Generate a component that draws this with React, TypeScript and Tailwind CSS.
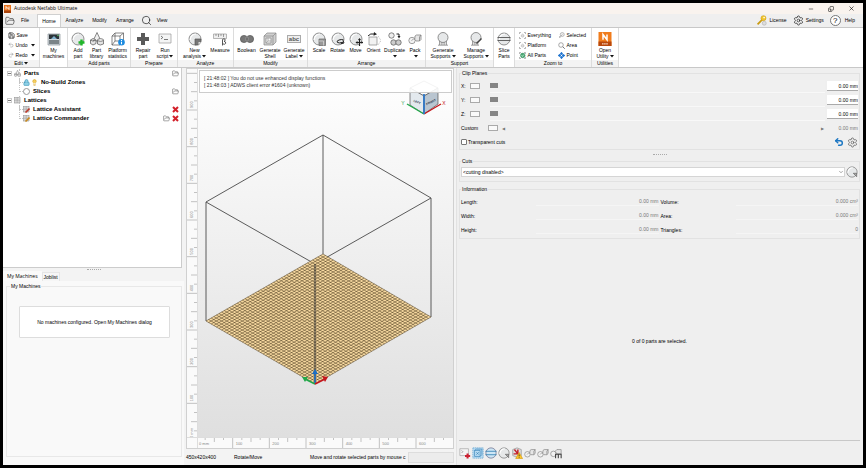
import type { ReactNode } from 'react'
import { Minus, X, Copy, Settings, Undo2, Redo2, Save, FolderOpen, Search, Lock, Lightbulb, ChevronDown } from 'lucide-react'

const INK = '#555'

function Icon({ children, className = 'w-[14px] h-[14px]' }: { children: ReactNode; className?: string }) {
  return (
    <svg viewBox="0 0 14 14" className={`shrink-0 ${className}`} fill="none" stroke={INK} strokeWidth="0.7">
      {children}
    </svg>
  )
}

const Ball = () => (
  <>
    <circle cx="7" cy="7" r="6" fill="#e6e8e9" stroke="#666" />
    <path d="M2 8 Q3 2 8 2" stroke="#fff" strokeWidth="1.2" />
  </>
)

const icons: Record<string, ReactNode> = {
  machines: (
    <>
      <path d="M1 2 H13 V13 H1Z" fill="#cfd6da" stroke="#8a9398" />
      <path d="M2 2.500 H12 V7 H2Z" fill="#2d3438" stroke="none" />
      <path d="M4 7 L7 4 L10 7Z" fill="#7fb2d0" stroke="none" />
      <path d="M2 9 H12 M2 11 H12" stroke="#60696e" strokeWidth="1.4" />
      <circle cx="11" cy="3.500" r="0.8" fill="#5cc46a" stroke="none" />
    </>
  ),
  addPart: (
    <>
      <Ball />
      <path d="M10.500 7.500 V13.500 M7.500 10.500 H13.500" stroke="#1fb52a" strokeWidth="2.400" />
    </>
  ),
  library: (
    <>
      <path d="M7 0.500 L11 9 H3Z" fill="#f1f1f1" />
      <path d="M0.500 8 L3 6.500 L6 8 V11.500 L3 13 L0.500 11.500Z M0.500 8 L3 9.200 L6 8" fill="#e4e4e4" />
      <path d="M7.500 8 V12 Q10 14 13.500 12 V8" fill="#e4e4e4" />
      <ellipse cx="10.500" cy="8" rx="3" ry="1.300" fill="#f6f6f6" />
    </>
  ),
  stats: (
    <>
      <path d="M1 4 H9 V13 H1Z M4 1 H12.500 V9 M1 4 L4 1 M9 4 L12.500 1 M4 1 V9 M1 13 L4 9 H10" />
      <circle cx="10.500" cy="10.300" r="3.300" fill="#1c8be0" stroke="none" />
      <path d="M10.500 9.700 V12.300 M10.500 8 V9" stroke="#fff" strokeWidth="1.100" />
    </>
  ),
  repair: <path d="M7 1 V13 M1 7 H13" stroke="#5a5a5a" strokeWidth="4" />,
  script: (
    <>
      <path d="M1 2 H13 V11 H1Z" fill="#f4f5f5" stroke="#999" />
      <path d="M3 4 L4.800 5.500 L3 7 M6 7.500 H10" stroke="#444" />
    </>
  ),
  analysis: (
    <>
      <Ball />
      <path d="M7 7 H13 V10 L10.500 13 H7Z" fill="#777" stroke="#555" />
      <path d="M10.500 13 V10 H13Z" fill="#ddd" stroke="none" />
    </>
  ),
  measure: (
    <>
      <path d="M0.500 2 H13.500 V6.500 H0.500Z" fill="#eee" stroke="#999" />
      <path d="M3 2 V4 M5.500 2 V5 M8 2 V4 M10.500 2 V5" stroke="#777" />
      <path d="M9.500 13.500 V7.500 Q11 6 12.200 7.500 Q12.500 9 11 9.300 Q13.300 9.700 12.600 11.500 Q11.500 13 9.800 11.800" stroke="#444" strokeWidth="0.900" />
    </>
  ),
  boolean: (
    <>
      <circle cx="4" cy="7" r="3.600" fill="#777" />
      <circle cx="10" cy="7" r="3.600" fill="#777" />
      <ellipse cx="7" cy="7" rx="1.100" ry="2.600" fill="#555" stroke="#aaa" />
    </>
  ),
  shell: (
    <>
      <path d="M1 4 L4 1 H13 V10 L10 13 H1Z" fill="#cfcfcf" stroke="#888" />
      <path d="M1 4 H10 V13 M10 4 L13 1" stroke="#888" />
      <path d="M3 6 H8 V11 H3Z" fill="#f6f6f6" stroke="#888" />
      <path d="M3 11 L5 9 H8 M5 9 V6" stroke="#999" />
    </>
  ),
  scale: (
    <>
      <Ball />
      <path d="M7 7 H13.500 V13.500 H7Z" fill="#999" stroke="#666" />
      <path d="M7 9 H11.500 V13.500" stroke="#ddd" />
    </>
  ),
  rotate: (
    <>
      <Ball />
      <path d="M12.500 8 Q11 7 8 8 Q5 9 6.500 10.500 Q8 11.500 12 10.300 M12 8.500 L13 11 L9.800 11.800" stroke="#222" strokeWidth="1" />
    </>
  ),
  move: (
    <>
      <Ball />
      <path d="M10.500 7 V14 M7 10.500 H14" stroke="#222" strokeWidth="1.200" />
      <path d="M10.500 6 L12 8 H9Z M14.200 10.500 L12.500 9 V12Z M6.500 10.500 L8.500 9 V12Z" fill="#222" stroke="none" />
    </>
  ),
  orient: (
    <>
      <path d="M2 5 H10 V13 H2Z" fill="#f2f2f2" stroke="#888" />
      <path d="M11 4 L14 8.500 L11 13" stroke="#aaa" strokeDasharray="1.200 0.800" />
      <path d="M1 4 Q3 1 8 2" stroke="#222" strokeWidth="1" />
      <path d="M7 0 L10 2.300 L6.500 3.700Z" fill="#222" stroke="none" />
    </>
  ),
  duplicate: (
    <>
      <circle cx="3.500" cy="3.500" r="2.700" fill="#eee" />
      <circle cx="5.500" cy="10.500" r="2.700" fill="#ccc" />
      <circle cx="10.500" cy="10.500" r="2.700" fill="#ccc" />
      <path d="M8.500 2 H11 V4" stroke="#222" strokeWidth="1" />
      <path d="M9.500 4 H12.500 L11 6.500Z" fill="#222" stroke="none" />
    </>
  ),
  pack: (
    <>
      <circle cx="4" cy="8.500" r="3.200" fill="#f2f2f2" stroke="#777" />
      <path d="M7 4 L8.500 3 H13 V7.500 L11.500 9 H8 Q6 8 7 4 M11.500 9 V5 L13 3" fill="#e6e6e6" stroke="#777" />
      <path d="M3.500 9 Q4 6.500 7 7" stroke="#999" />
    </>
  ),
  supports: (
    <>
      <circle cx="7" cy="5.500" r="5" fill="#e6e8e9" stroke="#666" />
      <path d="M3.500 9 V13 M5.200 10 V13 M7 10.500 V13 M8.800 10 V13 M10.500 9 V13 M2 13.200 H12" stroke="#777" />
    </>
  ),
  manage: (
    <>
      <circle cx="7" cy="5.500" r="5" fill="#e6e8e9" stroke="#666" />
      <path d="M3.500 9 V13 M5.200 10 V13 M7 10.500 V13 M8.800 10 V13 M2 13.200 H10" stroke="#777" />
      <path d="M7.500 11.500 L12.500 6.500" stroke="#444" strokeWidth="1.500" />
    </>
  ),
  slice: (
    <>
      <Ball />
      <path d="M0.500 5.500 H13.500 M0.500 8.500 H13.500" stroke="#555" strokeWidth="0.900" />
    </>
  ),
  corners: (
    <>
      <path d="M1 4 V1 H4 M10 1 H13 V4 M13 10 V13 H10 M4 13 H1 V10" stroke="#888" strokeWidth="1.200" />
      <path d="M4.500 6 L7 4 L10 6 V9 L7 10.500 L4.500 9Z" stroke="#999" fill="#ddd" />
    </>
  ),
  allParts: (
    <>
      <path d="M1 4 V1 H4 M10 1 H13 V4 M13 10 V13 H10 M4 13 H1 V10" stroke="#888" strokeWidth="1.200" />
      <circle cx="7.500" cy="7" r="4.800" fill="#4aa874" stroke="#2d7d52" />
      <path d="M5 6 L7 9 L10 5" stroke="#dff2e6" strokeWidth="1.200" />
    </>
  ),
  selected: (
    <>
      <circle cx="8.500" cy="5" r="4" stroke="#999" strokeWidth="1.200" fill="#eee" />
      <path d="M2 12 L9 5 M2 8 L5 11" stroke="#999" strokeWidth="1.200" />
    </>
  ),
  area: (
    <>
      <circle cx="6" cy="6" r="4.600" stroke="#666" strokeWidth="1.100" />
      <path d="M9.500 9.500 L13.500 13.500" stroke="#666" strokeWidth="1.800" />
    </>
  ),
  point: (
    <>
      <path d="M7 2 V12 M2 7 H12" stroke="#1f74d0" strokeWidth="2.600" />
      <path d="M7 -0.500 L11 4.500 H3Z M7 14.500 L11 9.500 H3Z M-0.500 7 L4.500 3 V11Z M14.500 7 L9.500 3 V11Z" fill="#1f74d0" stroke="none" />
      <circle cx="7" cy="7" r="1.300" fill="#fff" stroke="none" />
    </>
  ),
  play: (
    <>
      <path d="M1 2 H11 V10 H1Z" fill="#f4f4f4" stroke="#999" />
      <path d="M3 4 L4.500 5.500 L3 7" stroke="#777" />
      <path d="M10 7.500 V13.500 M7 10.500 H13" stroke="#cc2233" strokeWidth="2.400" />
    </>
  ),
  blueBox: (
    <>
      <path d="M1 1 H13 V13 H1Z" fill="#b9dcf3" stroke="#4792c6" strokeDasharray="1.500 0.700" />
      <path d="M3 4 H9.500 V11 H3Z M3 4 L5 2.500 H11.500 V9 L9.500 11 M5 6 L8 9 M8 6 L5 9" stroke="#2a78b0" />
    </>
  ),
  blueSlice: (
    <>
      <circle cx="7" cy="7" r="6" fill="#cde6f5" stroke="#557" />
      <path d="M0.500 5 H13.500 M0.500 9 H13.500" stroke="#3683b5" strokeWidth="1" />
    </>
  ),
  ball: (
    <>
      <Ball />
      <path d="M8.500 8.500 H12.500 V12.500Z" fill="#aaa" stroke="#555" />
    </>
  ),
  warning: (
    <>
      <path d="M2 3 L7 1 L12 3 V10 L7 12 L2 10Z" fill="#ddd" stroke="#888" />
      <path d="M4 3 L8 8 M8 3 V8 H3" stroke="#c3202c" strokeWidth="1.700" />
      <path d="M9.500 6.500 L13.500 13.500 H5.500Z" fill="#ffc928" stroke="#d19100" />
      <path d="M9.500 8.700 V11 M9.500 11.800 V12.600" stroke="#222" strokeWidth="0.900" />
    </>
  ),
  packM: (
    <>
      <circle cx="4" cy="8" r="3.200" fill="#f2f2f2" stroke="#777" />
      <path d="M6 5 L8 3 H13 V8 H8Z" fill="#e6e6e6" stroke="#777" />
      <path d="M6.500 13 V8.500 H13 V13 M9.700 8.500 V13" stroke="#444" strokeWidth="1.300" />
    </>
  ),
}

type Item = { icon: string; label: string[]; w: string; arrow?: boolean }
const groups: { name: string; w: string; items: Item[] }[] = [
  { name: '', w: 'w-[28px]', items: [{ icon: 'machines', label: ['My', 'machines'], w: 'w-[26px]' }] },
  {
    name: 'Add parts', w: 'w-[63px]', items: [
      { icon: 'addPart', label: ['Add', 'part'], w: 'w-[19px]' },
      { icon: 'library', label: ['Part', 'library'], w: 'w-[18px]' },
      { icon: 'stats', label: ['Platform', 'statistics'], w: 'w-[24px]' },
    ],
  },
  {
    name: 'Prepare', w: 'w-[47px]', items: [
      { icon: 'repair', label: ['Repair', 'part'], w: 'w-[22px]' },
      { icon: 'script', label: ['Run', 'script'], w: 'w-[22px]', arrow: true },
    ],
  },
  {
    name: 'Analyze', w: 'w-[56px]', items: [
      { icon: 'analysis', label: ['New', 'analysis'], w: 'w-[29px]', arrow: true },
      { icon: 'measure', label: ['Measure'], w: 'w-[22px]' },
    ],
  },
  {
    name: 'Modify', w: 'w-[74px]', items: [
      { icon: 'boolean', label: ['Boolean'], w: 'w-[23px]' },
      { icon: 'shell', label: ['Generate', 'Shell'], w: 'w-[24px]' },
      { icon: 'abc', label: ['Generate', 'Label'], w: 'w-[24px]', arrow: true },
    ],
  },
  {
    name: 'Arrange', w: 'w-[118px]', items: [
      { icon: 'scale', label: ['Scale'], w: 'w-[19px]' },
      { icon: 'rotate', label: ['Rotate'], w: 'w-[18px]' },
      { icon: 'move', label: ['Move'], w: 'w-[18px]' },
      { icon: 'orient', label: ['Orient'], w: 'w-[18px]' },
      { icon: 'duplicate', label: ['Duplicate', ''], w: 'w-[24px]', arrow: true },
      { icon: 'pack', label: ['Pack', ''], w: 'w-[17px]', arrow: true },
    ],
  },
  {
    name: 'Support', w: 'w-[68px]', items: [
      { icon: 'supports', label: ['Generate', 'Supports'], w: 'w-[33px]', arrow: true },
      { icon: 'manage', label: ['Manage', 'Supports'], w: 'w-[33px]', arrow: true },
    ],
  },
  { name: '', w: 'w-[21px]', items: [{ icon: 'slice', label: ['Slice', 'Parts'], w: 'w-[20px]' }] },
]

const Caret = () => (
  <svg viewBox="0 0 4 3" className="inline-block w-1 h-[3px] ml-px align-middle">
    <path d="M0 0 H4 L2 2.500Z" fill="#111" />
  </svg>
)

function Group({ name, w, children }: { name: ReactNode; w: string; children: ReactNode }) {
  return (
    <div className={`${w} shrink-0 flex flex-col border-r border-[#dcdcdc]`}>
      <div className="flex-1 min-h-0 flex justify-center pt-1">{children}</div>
      <div className={`h-[7px] shrink-0 leading-[7px] flex justify-center items-center ${name ? 'bg-[#f3f3f3]' : ''}`}>{name}</div>
    </div>
  )
}

function RibbonButton({ item }: { item: Item }) {
  const last = item.label.length - 1
  return (
    <button className={`${item.w} shrink-0 flex flex-col items-center justify-start leading-[6px] whitespace-nowrap`}>
      {item.icon === 'abc' ? (
        <span className="h-[14px] flex items-center mb-px">
          <span className="border border-[#aaa] bg-[#eee] px-px text-[6px] leading-[6px] font-bold text-[#555]">abc</span>
        </span>
      ) : (
        <Icon className="w-[14px] h-[14px] mb-px">{icons[item.icon]}</Icon>
      )}
      {item.label.map((line, i) => (
        <span key={i}>
          {line}
          {item.arrow && i === last && <Caret />}
        </span>
      ))}
    </button>
  )
}

function ZoomButton({ icon, label }: { icon: string; label: string }) {
  return (
    <button className="flex items-center gap-[2px] h-[10px]">
      <Icon className="w-[7px] h-[7px]">{icons[icon]}</Icon>
      {label}
    </button>
  )
}

function TitleBar() {
  return (
    <header className="h-[11px] flex items-center bg-[#f9f3ee] pl-px shrink-0 font-['Open_Sans',sans-serif]">
      <svg viewBox="0 0 7 8" className="w-[7px] h-2">
        <path d="M0 0 H7 V8 H0Z" fill="#e8711a" />
        <path d="M0 5.500 H7 V8 H0Z" fill="#a8430c" />
        <path d="M2 4.500 V1.500 L5 4.500 V1.500" fill="none" stroke="#fff" strokeWidth="0.9" />
      </svg>
      <span className="ml-[3px] flex-1">Autodesk Netfabb Ultimate</span>
      <div className="flex items-center gap-[14px] pr-2">
        <button aria-label="Minimize"><Minus className="w-[6px] h-[6px]" /></button>
        <button aria-label="Restore"><Copy className="w-[6px] h-[6px] -scale-x-100 rotate-180" /></button>
        <button aria-label="Close"><X className="w-[7px] h-[7px]" /></button>
      </div>
    </header>
  )
}

function MenuBar() {
  return (
    <nav className="h-[13px] flex items-stretch bg-[#efefef] shrink-0">
      <button aria-label="Open" className="w-[14px] pl-[2px]"><FolderOpen className="w-[10px] h-[10px]" strokeWidth={1.2} /></button>
      <button className="w-4 mr-1 text-center">File</button>
      <button className="w-6 bg-white border-x border-t border-[#d0d0d0]">Home</button>
      <button className="w-[27px]">Analyze</button>
      <button className="w-[23px]">Modify</button>
      <button className="w-7">Arrange</button>
      <button aria-label="Search" className="w-[15px] flex items-center justify-center">
        <Search className="w-[11px] h-[11px]" strokeWidth={1.3} />
      </button>
      <button className="w-4">View</button>
      <div className="flex-1" />
      <div className="flex items-center gap-[6px] pr-2">
        <button className="flex items-center gap-[2px]">
          <Icon className="w-[11px] h-[11px]">
            <path d="M2 12 L8 6" stroke="#c99a10" strokeWidth="2.200" />
            <circle cx="9.500" cy="4" r="3.200" fill="#f2c52c" stroke="#c99a10" />
            <circle cx="10.300" cy="3.300" r="1" fill="#fff" stroke="none" />
            <circle cx="10.500" cy="10.500" r="2.500" fill="#ddd" stroke="#aaa" />
          </Icon>
          License
        </button>
        <button className="flex items-center gap-[2px]"><Settings className="w-[11px] h-[11px]" strokeWidth={1.3} />Settings</button>
        <button className="flex items-center gap-1">
          <span className="w-[11px] h-[11px] rounded-full border border-[#777] text-[8px] leading-[9px] bg-white">?</span>
          Help
        </button>
      </div>
    </nav>
  )
}

function Ribbon() {
  return (
    <div className="h-[41px] flex bg-white border-y border-[#c8c8c8] shrink-0 overflow-hidden">
      <Group name={<>Edit <Caret /></>} w="w-[37px]">
        <div className="flex flex-col w-[27px] -mt-[2px]">
          <button className="h-[10px] shrink-0 flex items-center gap-[2px]"><Save className="w-[7px] h-[7px]" />Save</button>
          <button className="h-[10px] shrink-0 flex items-center gap-[2px]"><Undo2 className="w-[7px] h-[6px] text-[#888]" />Undo<span className="ml-auto leading-none"><Caret /></span></button>
          <button className="h-[10px] shrink-0 flex items-center gap-[2px]"><Redo2 className="w-[7px] h-[6px] text-[#888]" />Redo<span className="ml-auto leading-none"><Caret /></span></button>
        </div>
      </Group>
      {groups.map((group, i) => (
        <Group key={i} name={group.name} w={group.w}>
          {group.items.map((item) => <RibbonButton key={item.icon} item={item} />)}
        </Group>
      ))}
      <Group name="Zoom to" w="w-[77px]">
        <div className="grid grid-cols-[39px_30px] content-start -mt-[2px]">
          <ZoomButton icon="corners" label="Everything" />
          <ZoomButton icon="selected" label="Selected" />
          <ZoomButton icon="corners" label="Platform" />
          <ZoomButton icon="area" label="Area" />
          <ZoomButton icon="allParts" label="All Parts" />
          <ZoomButton icon="point" label="Point" />
        </div>
      </Group>
      <Group name="Utilities" w="w-[27px]">
        <button className="flex flex-col items-center justify-start leading-[6px]">
          <svg viewBox="0 0 14 14" className="w-[14px] h-[14px] mb-px">
            <path d="M0.500 0 H13.500 V14 H0.500Z" fill="#f07c1c" />
            <path d="M0.500 9.500 H13.500 V14 H0.500Z" fill="#b8480d" />
            <path d="M5 7.800 V2.500 L9 7.800 V2.500" fill="none" stroke="#fff" strokeWidth="1.500" />
            <path d="M4 11.800 H10" stroke="#f6d5bd" strokeWidth="1.300" strokeDasharray="1.600 0.500" />
          </svg>
          <span>Open</span>
          <span>Utility<Caret /></span>
        </button>
      </Group>
    </div>
  )
}

const Cross = () => (
  <svg viewBox="0 0 7 7" className="w-[7px] h-[7px]">
    <path d="M1 1 L6 6 M6 1 L1 6" stroke="#d3202a" strokeWidth="2" />
  </svg>
)

const Folder = () => <FolderOpen className="w-[7px] h-[7px] text-[#444]" strokeWidth={1.6} />

const Hatch = ({ accent }: { accent?: string }) => (
  <svg viewBox="0 0 7 7" className="w-[7px] h-[7px] shrink-0">
    <path d="M0 1 H7 M0 3 H7 M0 5 H7 M1 0 V7 M3 0 V7 M5 0 V7" stroke="#777" strokeWidth="0.8" strokeDasharray="1 0.6" />
    {accent && <path d="M2.500 6.500 L6.500 2.500" stroke={accent} strokeWidth="1.600" />}
  </svg>
)

function TreeRow({ root, icon, label, actions }: { root?: boolean; icon: ReactNode; label: string; actions?: ReactNode }) {
  return (
    <li className="h-[9px] flex items-center pl-1 pr-[2px]">
      {root ? (
        <button aria-label="Collapse" className="w-[5px] h-[5px] border border-[#ccc] flex items-center justify-center">
          <span className="w-[3px] h-px bg-[#777]" />
        </button>
      ) : (
        <span className="self-stretch w-1 ml-3 -mt-[9px] mb-1 border-l border-b border-dotted border-[#c4c4c4]" />
      )}
      <span className={`flex items-center gap-px mr-[3px] ${root ? 'ml-[2px]' : ''}`}>{icon}</span>
      <span className="flex-1">{label}</span>
      <span className="flex gap-[2px]">{actions}</span>
    </li>
  )
}

function SidePanel() {
  return (
    <aside className="flex flex-col min-w-0 bg-[#f3f3f3]">
      <div className="h-[200px] shrink-0 bg-white border-b border-r border-[#ccc] mr-[2px]">
        <ul className="pt-px font-bold text-[6px] leading-[9px]">
          <TreeRow
            root
            icon={<Icon className="w-[7px] h-[7px]">{icons.library}</Icon>}
            label="Parts"
            actions={<Folder />}
          />
          <TreeRow
            icon={
              <>
                <Lock className="w-[7px] h-[7px] text-[#3593b5]" fill="#8fd0e6" />
                <Lightbulb className="w-[7px] h-[7px] text-[#d8a020]" fill="#f6d060" />
              </>
            }
            label="No-Build Zones"
          />
          <TreeRow icon={<span className="w-[7px] h-[7px] rounded-full border border-[#999]" />} label="Slices" actions={<Folder />} />
          <TreeRow root icon={<Hatch />} label="Lattices" />
          <TreeRow icon={<Hatch accent="#c0392b" />} label="Lattice Assistant" actions={<Cross />} />
          <TreeRow icon={<Hatch accent="#c98a1e" />} label="Lattice Commander" actions={<><Folder /><Cross /></>} />
        </ul>
      </div>
      <div className="h-[2px] w-[14px] mx-auto border-b border-dotted border-[#aaa]" />
      <div className="h-[11px] flex items-end shrink-0">
        <button className="h-[10px] px-1 bg-[#fafafa] font-['Open_Sans',sans-serif]">My Machines</button>
        <button className="h-[9px] px-px bg-[#f6f6f6] border border-b-0 border-[#e6e6e6]">Joblist</button>
      </div>
      <div className="flex-1 bg-[#f9f9f9] pl-[3px] pr-[2px] pt-px pb-2">
        <fieldset className="h-full border border-[#e8e8e8] pl-3 pr-[11px]">
          <legend className="-ml-[9px] px-px leading-[8px]">My Machines</legend>
          <button className="mt-4 w-full h-8 bg-white border border-[#ddd] rounded-[1px]">
            No machines configured. Open My Machines dialog
          </button>
        </fieldset>
      </div>
    </aside>
  )
}

const LEFT: [number, number] = [9, 253]
const BACK: [number, number] = [126, 186]
const RIGHT: [number, number] = [234, 249]
const FRONT: [number, number] = [118, 316]

function gridLines(a: number[], b: number[], c: number[], d: number[], n: number) {
  let path = ''
  for (let i = 0; i <= n; i++) {
    const t = i / n
    path += `M${a[0] + (b[0] - a[0]) * t} ${a[1] + (b[1] - a[1]) * t}`
    path += `L${c[0] + (d[0] - c[0]) * t} ${c[1] + (d[1] - c[1]) * t}`
  }
  return path
}

function Viewport() {
  return (
    <svg viewBox="1 1 255 370" preserveAspectRatio="xMinYMin slice" className="block w-full h-full">
      <g fill="none" stroke="#4a4a4a" strokeWidth="0.9">
        <path d="M126 67 L9 134 L118 196 L234 130Z" />
        <path d="M9 134 V253 M234 130 V249 M126 67 V186" />
      </g>
      <path d={`M${LEFT} L${BACK} L${RIGHT} L${FRONT}Z`} fill="#f7d9a0" />
      <g fill="none" stroke="#44341a" strokeWidth="0.5">
        <path d={gridLines(LEFT, FRONT, BACK, RIGHT, 42)} />
        <path d={gridLines(LEFT, BACK, FRONT, RIGHT, 45)} />
      </g>
      <path d="M118 196 V316" stroke="#333" strokeWidth="1" />
      <g strokeWidth="1.6">
        <path d="M118 316 V304" stroke="#1d6fc4" />
        <path d="M118 316 L108 311" stroke="#22a84a" />
        <path d="M118 316 L128 311" stroke="#c4161c" />
      </g>
      <path d="M118 301 L121 306 H115Z" fill="#1d6fc4" />
      <path d="M105 309 L111 309 L108 314Z" fill="#22a84a" />
      <path d="M131 309 L125 308 L128 314Z" fill="#c4161c" />
      <g strokeWidth="0.7" stroke="#555">
        <path d="M213 20 L227 13 L241 20 L227 28Z" fill="#fdfdfd" />
        <path d="M213 20 L227 28 V46 L213 37Z" fill="#e3e9ee" />
        <path d="M241 20 L227 28 V46 L241 36Z" fill="#b9c5d0" />
      </g>
      <path d="M210 36 L227 46" stroke="#22a84a" strokeWidth="1.4" />
      <path d="M244 36 L227 46" stroke="#c4161c" strokeWidth="1.4" />
      <path d="M227 46 V26" stroke="#2f78c8" strokeWidth="1.8" />
      <g fontFamily="Liberation Sans, sans-serif" fontSize="5" textAnchor="middle">
        <text x="206" y="37" fill="#2a9a4a">Y</text>
        <text x="247" y="37" fill="#c4161c">X</text>
        <text x="220" y="35" fontSize="3" fontWeight="bold" fill="#345" transform="rotate(24 220 34)">LEFT</text>
        <text x="234" y="35" fontSize="3" fontWeight="bold" fill="#234" transform="rotate(-26 234 34)">FRONT</text>
      </g>
    </svg>
  )
}

function VerticalRuler() {
  const step = 110 / 3
  return (
    <svg viewBox="0 0 10 370" preserveAspectRatio="xMinYMin slice" className="block w-full h-full">
      {Array.from({ length: 41 }, (_, i) => {
        const y = 370 - (i * step) / 4
        const major = i % 4 === 0
        return <path key={i} d={`M${major ? 0 : i % 2 ? 7 : 4} ${y + 1} H10`} stroke="#b4b4b4" strokeWidth="0.8" />
      })}
      {Array.from({ length: 10 }, (_, i) => (
        <text key={i} x="0" y="0" transform={`translate(6 ${369 - i * step}) rotate(-90)`} fontSize="4" fill="#888" fontFamily="Liberation Sans, sans-serif">
          {i === 0 ? '0 mm' : i * 100}
        </text>
      ))}
    </svg>
  )
}

function HorizontalRuler() {
  const step = 110 / 3
  return (
    <svg viewBox="0 0 255 10" preserveAspectRatio="xMinYMin slice" className="block w-full h-full">
      {Array.from({ length: 28 }, (_, i) => {
        const x = (i * step) / 4 - 2
        return <path key={i} d={`M${x} 0 V${i % 4 === 0 ? 10 : i % 2 ? 2 : 4}`} stroke="#b4b4b4" strokeWidth="0.8" />
      })}
      {Array.from({ length: 7 }, (_, i) => (
        <text key={i} x={i * step + 1} y="7" fontSize="4" fill="#888" fontFamily="Liberation Sans, sans-serif">
          {i === 0 ? '0 mm' : i * 100}
        </text>
      ))}
    </svg>
  )
}

function ScenePanel() {
  return (
    <main className="flex flex-col min-w-0 min-h-0 bg-[#f3f3f3] px-[2px]">
      <div className="flex-1 min-h-0 grid grid-cols-[11px_minmax(0,1fr)] grid-rows-[minmax(0,1fr)_11px] border border-[#d0d0d0]">
        <div className="min-h-0 overflow-hidden bg-[#fafafa] border-r border-[#ddd]"><VerticalRuler /></div>
        <div className="relative min-h-0 overflow-hidden bg-gradient-to-b from-white to-[#dfdfdf]">
          <Viewport />
          <div className="absolute top-px left-px right-px h-[23px] bg-white/90 border border-[#ccc] pl-1 pt-[4px] leading-[7px] text-[#333]">
            <p>[ 21:48:02 ] You do not use enhanced display functions</p>
            <p>[ 21:48:03 ] ADWS client error #1604 (unknown)</p>
          </div>
        </div>
        <div className="border-t border-r border-[#ddd] bg-[#fafafa]" />
        <div className="min-w-0 overflow-hidden bg-[#fafafa] border-t border-[#ddd]"><HorizontalRuler /></div>
      </div>
      <footer className="h-4 flex items-center shrink-0 whitespace-nowrap">
        <span className="w-12 shrink-0">450x420x400</span>
        <span className="w-[76px] shrink-0">Rotate/Move</span>
        <span className="shrink-0">Move and rotate selected parts by mouse c</span>
        <span className="flex-1 h-[11px] ml-[2px] bg-[#ececec] border border-[#ddd]" />
      </footer>
    </main>
  )
}

const boxClass = 'w-[10px] h-[6px] bg-[#fafafa] border border-[#aaa]'

function ClipRow({ axis }: { axis: string }) {
  return (
    <div className="h-[14px] flex items-center">
      <span className="w-[9px]">{axis}:</span>
      <button aria-label={`${axis} plane`} className={boxClass} />
      <input
        type="range"
        aria-label={`${axis} position`}
        defaultValue={0}
        className="flex-1 min-w-0 h-[13px] ml-[10px] mr-[2px] appearance-none bg-[#f0f0f0] border-b border-[#f8f8f8] [&::-webkit-slider-thumb]:appearance-none [&::-webkit-slider-thumb]:w-2 [&::-webkit-slider-thumb]:h-[5px] [&::-webkit-slider-thumb]:bg-[#858585]"
      />
      <input aria-label={`${axis} value`} defaultValue="0.00 mm" className="w-[31px] h-[10px] bg-white border-b border-[#aaa] text-right" />
    </div>
  )
}

function Info({ label, value }: { label: string; value: string }) {
  return (
    <div className="flex items-center h-[14px]">
      <span className="w-[75px]">{label}:</span>
      <span className="flex-1 text-right text-[#777] border-b border-[#f5f5f5]">{value}</span>
    </div>
  )
}

function PropertiesPanel() {
  return (
    <section className="flex flex-col min-w-0 bg-[#efefef] border-l border-[#e2e2e2] pl-[2px] pr-[3px]">
      <fieldset className="border border-[#e2e2e2] px-px pt-[2px] mt-px">
        <legend className="px-px leading-[8px]">Clip Planes</legend>
        <ClipRow axis="X" />
        <ClipRow axis="Y" />
        <ClipRow axis="Z" />
        <div className="h-[14px] flex items-center">
          <span className="w-[27px]">Custom</span>
          <button aria-label="Custom plane" className={boxClass} />
          <span className="ml-1 text-[4px] text-[#777]">◀</span>
          <span className="ml-auto mr-[15px] text-[4px] text-[#777]">▶</span>
          <span className="text-[#777]">0.00 mm</span>
        </div>
        <div className="h-[14px] flex items-center">
          <label className="flex items-center gap-px">
            <input type="checkbox" className="appearance-none w-[6px] h-[6px] border border-[#777] rounded-[1px] bg-white" />
            Transparent cuts
          </label>
          <button aria-label="Reset" className="ml-auto"><Undo2 className="w-[10px] h-[10px] text-[#1c77c3]" strokeWidth={3.5} /></button>
          <button aria-label="Clip settings" className="ml-[3px]"><Settings className="w-[11px] h-[11px] text-[#555]" strokeWidth={1.5} /></button>
        </div>
      </fieldset>
      <div className="mt-[4px] mb-[2px] h-px w-[14px] mx-auto border-b border-dotted border-[#aaa]" />
      <fieldset className="border border-[#e2e2e2] px-px pt-px pb-[3px]">
        <legend className="px-px leading-[8px]">Cuts</legend>
        <div className="flex items-center gap-px">
          <div className="relative flex-1">
            <select aria-label="Cuts" className="block w-full h-[10px] bg-white border border-[#d5d5d5] pl-px appearance-none">
              <option>&lt;cutting disabled&gt;</option>
            </select>
            <ChevronDown className="absolute right-px top-[2px] w-[6px] h-[6px] text-[#555] pointer-events-none" />
          </div>
          <button aria-label="Add cut"><Icon className="w-[12px] h-[12px]">{icons.ball}</Icon></button>
        </div>
      </fieldset>
      <fieldset className="border border-[#e2e2e2] px-px pt-[2px] pb-px mt-[3px]">
        <legend className="px-px leading-[8px]">Information</legend>
        <div className="grid grid-cols-2 gap-x-[2px]">
          <Info label="Length" value="0.00 mm" />
          <Info label="Volume" value="0.000 cm³" />
          <Info label="Width" value="0.00 mm" />
          <Info label="Area" value="0.000 cm³" />
          <Info label="Height" value="0.00 mm" />
          <Info label="Triangles" value="0" />
        </div>
      </fieldset>
      <div className="flex-1 pt-1 flex items-center justify-center border-b border-[#c8c8c8]">0 of 0 parts are selected.</div>
      <div className="h-6 flex items-center gap-px shrink-0">
        {['play', 'blueBox', 'blueSlice', 'ball', 'warning', 'pack', 'pack', 'packM'].map((name, i) => (
          <button key={i} aria-label={`Tool ${i + 1}`}><Icon className="w-[12px] h-[12px]">{icons[name]}</Icon></button>
        ))}
      </div>
    </section>
  )
}

export default function App() {
  return (
    <div className="h-screen flex flex-col overflow-hidden border-3 border-black bg-[#efefef] text-[5px] leading-[7px] text-black font-['Liberation_Sans',Arial,sans-serif]">
      <TitleBar />
      <MenuBar />
      <Ribbon />
      <div className="flex-1 min-h-0 grid grid-cols-[181fr_272fr_407fr] grid-rows-[minmax(0,1fr)]">
        <SidePanel />
        <ScenePanel />
        <PropertiesPanel />
      </div>
    </div>
  )
}
